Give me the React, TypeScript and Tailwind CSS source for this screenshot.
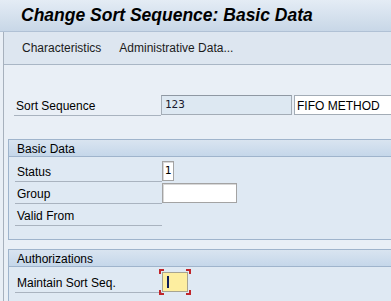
import React from "react";

const font = { fontFamily: '"Liberation Sans", Arial, sans-serif' };

const Label: React.FC<{ text: string }> = ({ text }) => (
  <div className="w-[147px] h-full shrink-0 border-b border-[#a9b3bf] pl-[2px] pt-[2px] flex items-center text-[12px] text-black">
    {text}
  </div>
);

const GroupBox: React.FC<{ title: string; children: React.ReactNode; className?: string }> = ({
  title,
  children,
  className,
}) => (
  <div className={"ml-[4px] border border-r-0 border-[#9fb4cc] bg-[#dfe9f3] " + (className ?? "")}>
    <div className="h-[17px] bg-gradient-to-b from-[#d9e4f0] to-[#c5d7ea] border-b border-[#9fb4cc] pl-[8px] pt-[1px] flex items-center text-[12px] text-black">
      {title}
    </div>
    <div className="pl-[6px] pt-[3px]">{children}</div>
  </div>
);

export default function App() {
  return (
    <div className="w-[391px] h-[301px] overflow-hidden bg-[#e9eff6]" style={font}>
      {/* title bar */}
      <div className="h-[32px] bg-gradient-to-b from-[#e4ecf5] to-[#c8d7e7] border-b border-[#b0c1d5] pl-[21px] flex items-center">
        <h1 className="text-[17.5px] font-bold italic text-black">
          Change Sort Sequence: Basic Data
        </h1>
      </div>

      <div className="ml-[3px] border-l border-[#a7b1bd]">
        {/* toolbar */}
        <div className="h-[33px] bg-[#dde6f0] border-b border-[#a9b6c5] pl-[18px] flex items-center gap-[18px] text-[12px] text-[#1b1b1b]">
          <span>Characteristics</span>
          <span>Administrative Data...</span>
        </div>

        {/* content */}
        <div className="pt-[30px]">
          <div className="h-[21px] ml-[10px] flex items-stretch">
            <Label text="Sort Sequence" />
            <div
              className="w-[131px] h-[20px] bg-[#dde8f2] border border-[#a3acb6] border-t-[#8f98a3] flex items-center pl-[3px] pt-[1px] text-[11px] text-[#1a1a2e]"
              style={{ fontFamily: '"DejaVu Sans Mono", monospace' }}
            >
              123
            </div>
            <div className="ml-[2px] flex-1 h-[20px] bg-white border border-r-0 border-[#a3acb6] flex items-center pl-[2px] pt-[1px] text-[12px] text-black">
              FIFO METHOD
            </div>
          </div>

          <GroupBox title="Basic Data" className="mt-[23px] h-[101px]">
            <div className="h-[22px] flex items-stretch">
              <Label text="Status" />
              <div
                className="w-[12px] h-[20px] mt-[1px] bg-white border border-[#a3a3a3] shadow-[inset_1px_1px_0_#d8d8d8] flex items-center justify-center text-[11px]"
                style={{ fontFamily: '"DejaVu Sans Mono", monospace' }}
              >
                1
              </div>
            </div>
            <div className="h-[22px] flex items-stretch">
              <Label text="Group" />
              <div className="w-[75px] h-[20px] mt-[1px] bg-white border border-[#a3a3a3] shadow-[inset_1px_1px_0_#d8d8d8]" />
            </div>
            <div className="h-[22px] flex items-stretch">
              <Label text="Valid From" />
            </div>
          </GroupBox>

          <GroupBox title="Authorizations" className="mt-[9px] h-[60px]">
            <div className="h-[22px] mt-[1px] flex items-stretch">
              <Label text="Maintain Sort Seq." />
              <div className="relative w-[26px] h-[20px] mt-[1px]">
                <div className="w-full h-full bg-[#fdeea0] border border-[#a7a491] flex items-center pl-[4px]">
                  <div className="w-[2px] h-[12px] bg-[#0b1a5c]" />
                </div>
                <span className="absolute -left-[3px] -top-[3px] w-[5px] h-[5px] border-l-2 border-t-2 border-[#c0262b]" />
                <span className="absolute -right-[3px] -top-[3px] w-[5px] h-[5px] border-r-2 border-t-2 border-[#c0262b]" />
                <span className="absolute -left-[3px] -bottom-[3px] w-[5px] h-[5px] border-l-2 border-b-2 border-[#c0262b]" />
                <span className="absolute -right-[3px] -bottom-[3px] w-[5px] h-[5px] border-r-2 border-b-2 border-[#c0262b]" />
              </div>
            </div>
          </GroupBox>
        </div>
      </div>
    </div>
  );
}
